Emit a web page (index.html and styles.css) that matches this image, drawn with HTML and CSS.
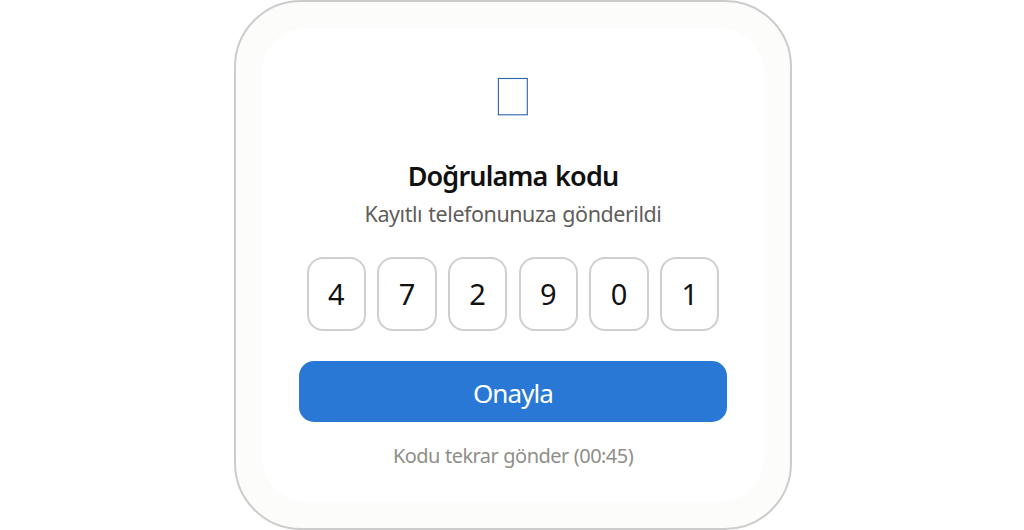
FILE: index.html
```
<!DOCTYPE html>
<html lang="tr">
<head>
  <meta charset="UTF-8">
  <meta name="viewport" content="width=device-width, initial-scale=1.0">
  <title>Doğrulama kodu</title>
  <link rel="stylesheet" href="styles.css">
</head>
<body>
  <div class="phone">
    <main class="screen">
      <svg class="icon" width="32" height="40" viewBox="0 0 32 40" aria-hidden="true">
        <rect x="1.4" y="1.5" width="28.9" height="36.3" fill="none" stroke="#2a62ac" stroke-width="1.1"/>
      </svg>
      <h1 class="title">Doğrulama kodu</h1>
      <p class="subtitle">Kayıtlı telefonunuza gönderildi</p>
      <div class="code">
        <div class="digit">4</div>
        <div class="digit">7</div>
        <div class="digit">2</div>
        <div class="digit">9</div>
        <div class="digit">0</div>
        <div class="digit">1</div>
      </div>
      <button class="confirm" type="button">Onayla</button>
      <div class="resend">Kodu tekrar gönder (00:45)</div>
    </main>
  </div>
</body>
</html>
```
FILE: styles.css
```
* {
  box-sizing: border-box;
}
body {
  margin: 0;
  background: #ffffff;
  font-family: "Segoe UI", "Noto Sans", sans-serif;
  color: #111111;
}
/* Device frame */
.phone {
  width: 558px;
  height: 530px;
  margin: 0 auto 0 234px;
  padding: 26px;
  border: 2px solid #cccccc;
  border-radius: 67px;
  background: #fcfcfa;
}
.screen {
  display: flex;
  flex-direction: column;
  align-items: center;
  height: 474px;
  padding: 49px 37px 0;
  border-radius: 45px;
  background: #ffffff;
}
.icon {
  display: block;
  margin-bottom: 40px;
}
.title {
  margin: 0;
  font-size: 27px;
  line-height: 38px;
  font-weight: 600;
  letter-spacing: -0.85px;
  word-spacing: 1.5px;
  white-space: nowrap;
}
.subtitle {
  margin: 1px 0 0;
  font-size: 21.5px;
  line-height: 36px;
  letter-spacing: -0.45px;
  word-spacing: 1px;
  color: #5f5e5a;
  white-space: nowrap;
}
/* One box per digit */
.code {
  display: flex;
  gap: 11.2px;
  margin-top: 24.6px;
}
.digit {
  display: flex;
  align-items: center;
  justify-content: center;
  width: 59.5px;
  height: 74px;
  padding-bottom: 1px;
  border: 2px solid #cfcfcf;
  border-radius: 16px;
  font-size: 29px;
}
.confirm {
  width: 100%;
  height: 61px;
  margin-top: 30px;
  padding: 4px 0 0;
  border: none;
  border-radius: 15px;
  background: #2a78d6;
  color: #ffffff;
  font-family: inherit;
  font-size: 26px;
  letter-spacing: -0.9px;
}
.resend {
  margin-top: 18px;
  font-size: 20px;
  line-height: 32px;
  letter-spacing: -0.55px;
  word-spacing: 0.5px;
  color: #8f8e88;
  white-space: nowrap;
}
```
